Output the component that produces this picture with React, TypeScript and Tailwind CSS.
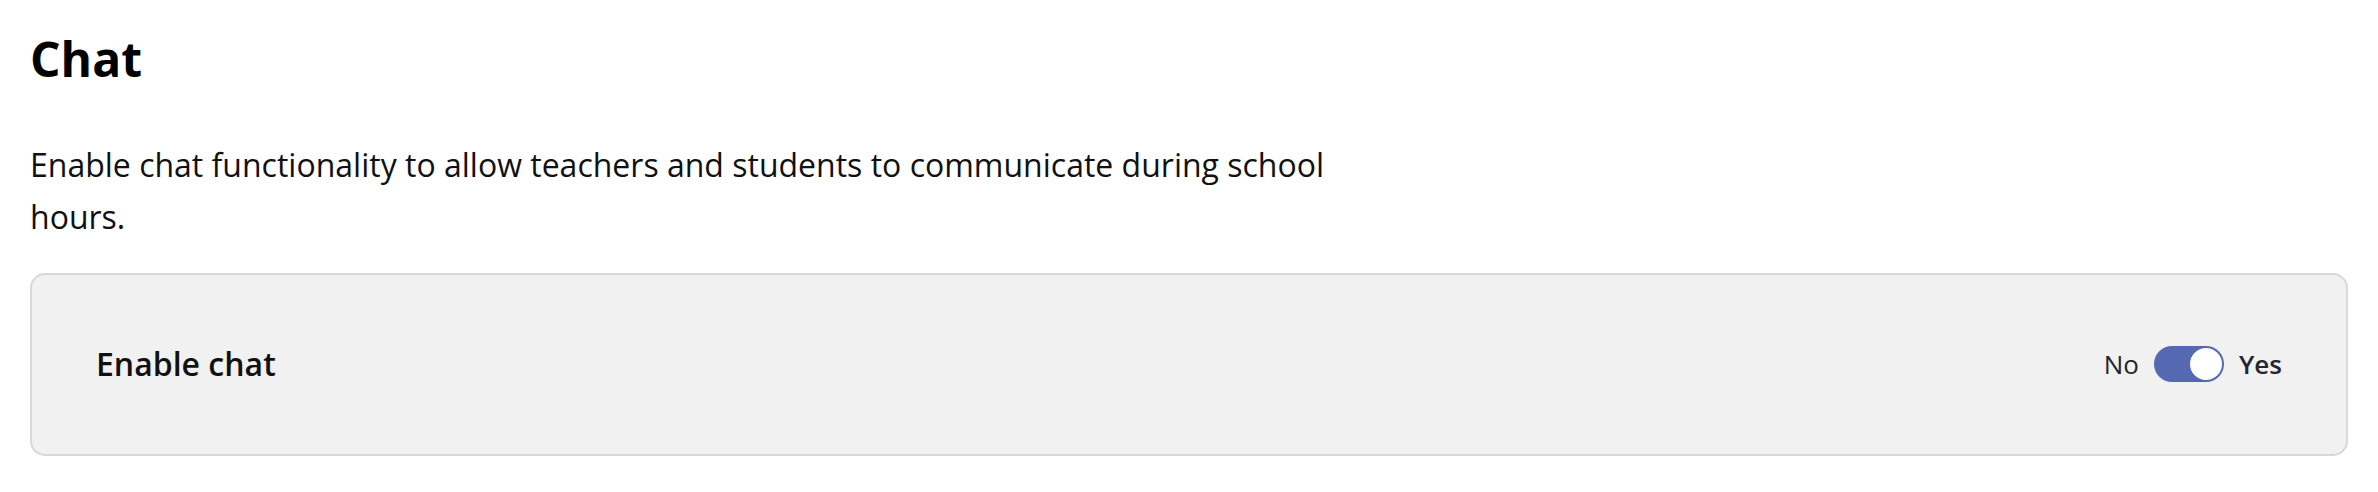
import { useState } from "react";

const App = () => {
  const [enabled, setEnabled] = useState(true);

  return (
    <div className="min-h-screen bg-white px-[30px] pt-[30px] font-['Open_Sans',sans-serif] text-black">
      <h1 className="text-[48px] font-bold leading-[1.2]">Chat</h1>

      <p className="mt-[51px] max-w-[1360px] text-[32px] leading-[52px] text-[#111]">
        Enable chat functionality to allow teachers and students to communicate during school hours.
      </p>

      {/* Setting card */}
      <div className="mt-[30px] flex h-[183px] items-center justify-between rounded-[15px] border-2 border-[#d8d8d8] bg-[#f1f1f1] px-[64px]">
        <span className="text-[32px] font-semibold text-[#111]">Enable chat</span>

        <div className="flex items-center gap-[15px] text-[26px] text-[#252430]">
          <span>No</span>
          <button
            onClick={() => setEnabled(!enabled)}
            className={`flex h-[36px] w-[70px] items-center rounded-full p-[2px] ${
              enabled ? "justify-end bg-[#5469b1]" : "justify-start bg-[#c4c4c4]"
            }`}
          >
            <span className="h-[32px] w-[32px] rounded-full bg-white" />
          </button>
          <span className="font-semibold">Yes</span>
        </div>
      </div>
    </div>
  );
};

export default App;
